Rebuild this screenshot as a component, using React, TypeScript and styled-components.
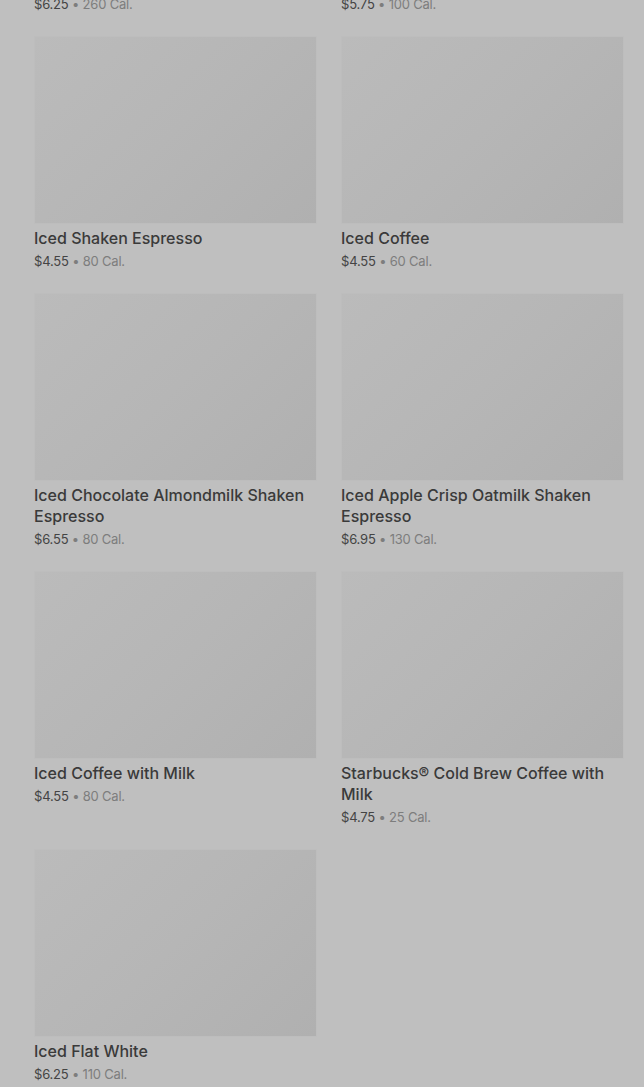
import React from 'react';
import styled, { createGlobalStyle } from 'styled-components';

const GlobalStyle = createGlobalStyle`
  html, body {
    margin: 0;
    padding: 0;
    background: #bfbfbf;
    font-family: Inter, "Noto Sans", "Liberation Sans", sans-serif;
    overflow: hidden;
  }
`;

interface Drink {
  name: string;
  price: string;
  cal: number;
}

const drinks: Drink[] = [
  { name: 'Iced Caffè Latte', price: '$6.25', cal: 260 },
  { name: 'Iced Caffè Americano', price: '$5.75', cal: 100 },
  { name: 'Iced Shaken Espresso', price: '$4.55', cal: 80 },
  { name: 'Iced Coffee', price: '$4.55', cal: 60 },
  { name: 'Iced Chocolate Almondmilk Shaken Espresso', price: '$6.55', cal: 80 },
  { name: 'Iced Apple Crisp Oatmilk Shaken Espresso', price: '$6.95', cal: 130 },
  { name: 'Iced Coffee with Milk', price: '$4.55', cal: 80 },
  { name: 'Starbucks® Cold Brew Coffee with Milk', price: '$4.75', cal: 25 },
  { name: 'Iced Flat White', price: '$6.25', cal: 110 },
];

const Page = styled.div`
  width: 644px;
  height: 1087px;
  overflow: hidden;
`;

// list is scrolled: first row sits above the viewport
const Grid = styled.div`
  display: grid;
  grid-template-columns: 283px 283px;
  column-gap: 24px;
  row-gap: 23px;
  align-items: start;
  padding-left: 34px;
  margin-top: -221px;
`;

const Card = styled.div`
  display: flex;
  flex-direction: column;
`;

const Thumb = styled.div`
  height: 188px;
  box-sizing: border-box;
  border: 1px solid #bdbdbd;
  background: linear-gradient(135deg, #bbbbbb 0%, #b6b6b6 50%, #b0b0b0 100%);
`;

const Title = styled.div`
  margin-top: 4px;
  font-size: 16px;
  line-height: 21px;
  font-weight: 500;
  color: #3a3a3a;
`;

const Meta = styled.div`
  margin-top: 3px;
  font-size: 13px;
  line-height: 18px;
  letter-spacing: -0.2px;
  color: #444444;
`;

const Cal = styled.span`
  color: #7d7d7d;
`;

export default function App() {
  return (
    <>
      <GlobalStyle />
      <Page>
        <Grid>
          {drinks.map((d) => (
            <Card key={d.name}>
              <Thumb />
              <Title>{d.name}</Title>
              <Meta>
                {d.price} <Cal>• {d.cal} Cal.</Cal>
              </Meta>
            </Card>
          ))}
        </Grid>
      </Page>
    </>
  );
}
